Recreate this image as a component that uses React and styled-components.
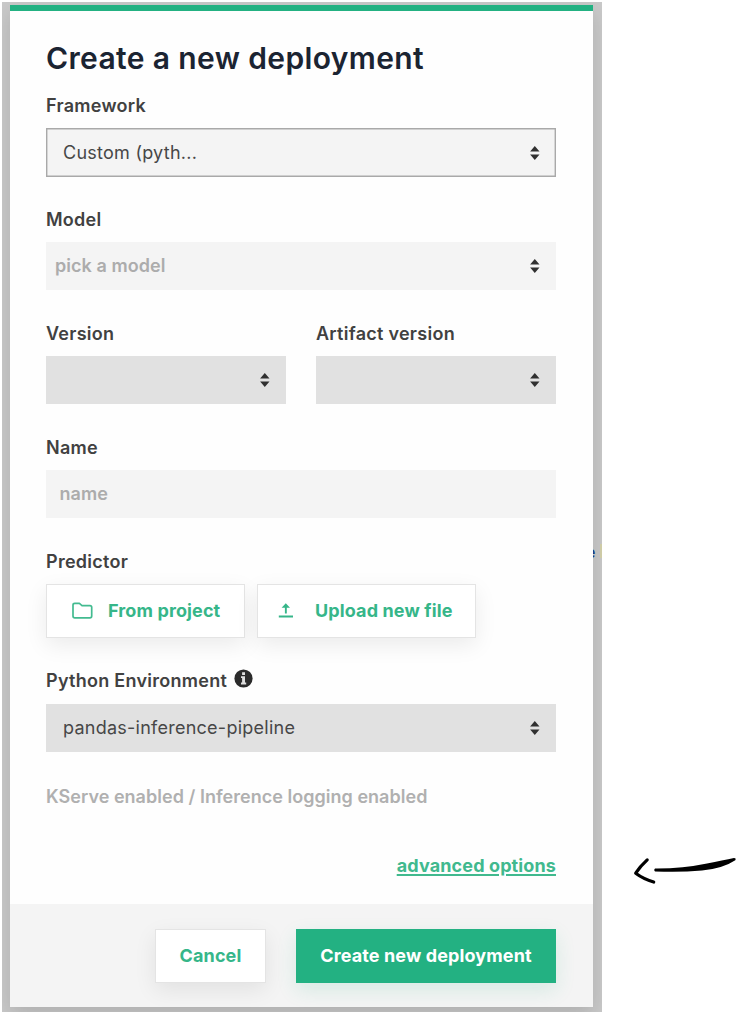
import React from "react";
import styled, { createGlobalStyle } from "styled-components";

const GlobalStyle = createGlobalStyle`
  * { box-sizing: border-box; }
  body { margin: 0; background: #fff; font-family: Inter, "Liberation Sans", sans-serif; }
`;

const Page = styled.main`
  display: flex;
  align-items: flex-start;
  width: 739px;
  height: 1021px;
  padding: 2px 0 0 2px;
  overflow: hidden;
`;

const Backdrop = styled.div`
  position: relative;
  flex: none;
  width: 600px;
  height: 1010px;
  padding: 3px 9px 5px 8px;
  background: #c9c9c9;
  overflow: hidden;
`;

const Behind = styled.span`
  position: absolute;
  left: 584px;
  top: 540px;
  font-size: 16px;
  line-height: 20px;
  font-weight: 500;
  color: #173d86;
`;

const BehindMark = styled.span`
  position: absolute;
  left: 598px;
  top: 542px;
  width: 2px;
  height: 14px;
  background: #d3d0ab;
`;

const Modal = styled.section`
  position: relative;
  display: flex;
  flex-direction: column;
  height: 1002px;
  background: #fefefe;
  border-top: 6px solid #23b182;
  box-shadow: 0 8px 20px rgba(0, 0, 0, 0.13);
`;

const Body = styled.div`
  flex: 1;
  display: flex;
  flex-direction: column;
  padding: 27px 37px 0 36px;
`;

const Title = styled.h1`
  margin: 0 0 15px;
  font-size: 30px;
  line-height: 40px;
  font-weight: 600;
  letter-spacing: 0.37px;
  white-space: nowrap;
  color: #1b2432;
`;

const Field = styled.div`
  display: flex;
  flex-direction: column;
  gap: ${(p) => p.$gap || 10}px;
  height: ${(p) => p.$height || 114}px;
`;

const Label = styled.label`
  display: flex;
  align-items: center;
  gap: 7px;
  height: 25px;
  font-size: 18px;
  line-height: 25px;
  font-weight: 600;
  letter-spacing: 0.27px;
  white-space: nowrap;
  color: #414141;
`;

const Columns = styled.div`
  display: grid;
  grid-template-columns: 240px 240px;
  justify-content: space-between;
`;

const Box = styled.div`
  display: flex;
  align-items: center;
  justify-content: space-between;
  height: ${(p) => (p.$outlined ? 49 : 48.4)}px;
  padding: 0 16px 0 ${(p) => p.$indent ?? 17}px;
  background: ${(p) => (p.$dark ? "#e1e1e1" : "#f4f4f4")};
  box-shadow: ${(p) => (p.$outlined ? "inset 0 0 0 1.4px #a9a9a9" : "none")};
`;

const Value = styled.span`
  font-size: 18px;
  line-height: 24px;
  font-weight: ${(p) => (p.$muted ? 600 : 400)};
  letter-spacing: ${(p) => (p.$muted ? 0.06 : 0.25)}px;
  color: ${(p) => (p.$muted ? "#acacac" : "#474747")};
`;

const Actions = styled.div`
  display: flex;
  gap: 12px;
`;

const Button = styled.button`
  display: flex;
  align-items: center;
  justify-content: ${(p) => (p.$icon ? "flex-start" : "center")};
  gap: ${(p) => p.$gap || 0}px;
  width: ${(p) => p.$width}px;
  height: 54px;
  padding: 0 0 0 ${(p) => p.$icon || 0}px;
  border: ${(p) => (p.$primary ? "1px solid #23b182" : "1.5px solid #e4e4e4")};
  background: ${(p) => (p.$primary ? "#23b182" : "#fff")};
  box-shadow: ${(p) =>
    p.$primary ? "0 7px 20px rgba(35, 177, 130, 0.14)" : "0 7px 22px rgba(0, 0, 0, 0.08)"};
  font: 700 18px/24px Inter, "Liberation Sans", sans-serif;
  letter-spacing: 0.12px;
  white-space: nowrap;
  color: ${(p) => (p.$primary ? "#fff" : "#36b689")};
`;

const Status = styled.p`
  margin: 1px 0 0;
  font-size: 18px;
  line-height: 25px;
  font-weight: 600;
  letter-spacing: 0.03px;
  color: #b0b0b0;
`;

const Advanced = styled.a`
  align-self: flex-end;
  margin-top: 45px;
  font-size: 18px;
  line-height: 24px;
  font-weight: 700;
  letter-spacing: 0.12px;
  color: #40b98e;
  text-decoration: underline;
  text-decoration-thickness: 1.5px;
  text-underline-offset: 2px;
`;

const Footer = styled.footer`
  display: flex;
  justify-content: flex-end;
  gap: 30px;
  height: 103px;
  padding: 25px 37px 0 0;
  background: #f4f4f4;
`;

const Aside = styled.aside`
  flex: none;
  padding: 852px 0 0 30px;
`;

const Sort = () => (
  <svg width="11" height="16" viewBox="0 0 11 16" fill="#303030">
    <path d="M5.8 1 L10.5 6.5 H1.1 Z M1.1 9.6 H10.5 L5.8 15.1 Z" />
  </svg>
);

const FolderIcon = () => (
  <svg width="22" height="18" viewBox="0 0 22 18" fill="none" stroke="#43bb90" strokeWidth="1.7" strokeLinejoin="round">
    <path d="M2 3 Q2 1.4 3.8 1.4 H8.4 L11 3.6 H19 Q20.7 3.6 20.7 5.3 V14 Q20.7 15.8 18.9 15.8 H3.8 Q2 15.8 2 14 Z" />
  </svg>
);

const UploadIcon = () => (
  <svg width="15" height="16" viewBox="0 0 15 16" fill="#36b689">
    <path d="M7.8 .2 L12 4.8 H8.8 V10.6 H6.9 V4.8 H3.6 Z M.8 12.6 H15 V14.6 H.8 Z" />
  </svg>
);

const InfoMark = styled.svg`
  margin-bottom: 4px;
`;

const InfoIcon = () => (
  <InfoMark width="19" height="19" viewBox="0 0 19 19">
    <circle cx="9.5" cy="9.5" r="9.1" fill="#2b2b2b" />
    <path d="M8.1 3.2 H11 V5.9 H8.1 Z M7 7.3 H11 V13.6 H12.2 V15.5 H7 V13.6 H8.1 V9.1 H7 Z" fill="#dedede" />
  </InfoMark>
);

const Arrow = () => (
  <svg width="107" height="36" viewBox="0 0 107 36">
    <path d="M15.2 5.9 Q8 12.5 3.7 19.2 Q11 24.7 21.7 28" fill="none" stroke="#000" strokeWidth="3.2" strokeLinecap="round" strokeLinejoin="round" />
    <path d="M23 14.6 Q50 14.8 75 9.6 Q91 6.5 102 4.1 Q104.4 4.1 103.3 6.3 Q91 14.5 70 16.6 Q47 18.5 23 17.4 Q21.2 16 23 14.6 Z" />
  </svg>
);

export default function App() {
  return (
    <Page>
      <GlobalStyle />
      <Backdrop>
        <Behind>e</Behind>
        <BehindMark />
        <Modal>
          <Body>
            <Title>Create a new deployment</Title>
            <Field>
              <Label>Framework</Label>
              <Box $outlined><Value>Custom (pyth...</Value><Sort /></Box>
            </Field>
            <Field>
              <Label>Model</Label>
              <Box $indent={9}><Value $muted>pick a model</Value><Sort /></Box>
            </Field>
            <Columns>
              <Field>
                <Label>Version</Label>
                <Box $dark><Value /><Sort /></Box>
              </Field>
              <Field>
                <Label>Artifact version</Label>
                <Box $dark><Value /><Sort /></Box>
              </Field>
            </Columns>
            <Field>
              <Label>Name</Label>
              <Box $indent={13.5}><Value $muted>name</Value></Box>
            </Field>
            <Field $height={119}>
              <Label>Predictor</Label>
              <Actions>
                <Button $width={199} $icon={24} $gap={15}><FolderIcon />From project</Button>
                <Button $width={219} $icon={20} $gap={22}><UploadIcon />Upload new file</Button>
              </Actions>
            </Field>
            <Field $height={115} $gap={11}>
              <Label>Python Environment <InfoIcon /></Label>
              <Box $dark><Value>pandas-inference-pipeline</Value><Sort /></Box>
            </Field>
            <Status>KServe enabled / Inference logging enabled</Status>
            <Advanced>advanced options</Advanced>
          </Body>
          <Footer>
            <Button $width={111}>Cancel</Button>
            <Button $width={260} $primary>Create new deployment</Button>
          </Footer>
        </Modal>
      </Backdrop>
      <Aside><Arrow /></Aside>
    </Page>
  );
}
